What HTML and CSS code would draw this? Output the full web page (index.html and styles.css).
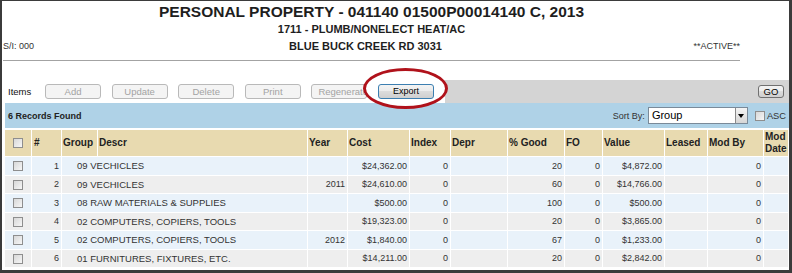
FILE: index.html
```html
<!DOCTYPE html>
<html lang="en">
<head>
    <meta charset="UTF-8">
    <title>Personal Property Items</title>
    <link rel="stylesheet" href="styles.css">
</head>
<body>
    <div class="frame">
        <!-- Account header -->
        <div class="head">
            <div class="title">PERSONAL PROPERTY - 041140 01500P00014140 C, 2013</div>
            <div class="sub">1711 - PLUMB/NONELECT HEAT/AC</div>
            <div class="info">
                <span class="si">S/I: 000</span>
                <span class="addr">BLUE BUCK CREEK RD 3031</span>
                <span class="status">**ACTIVE**</span>
            </div>
            <hr class="rule">
        </div>

        <!-- Toolbar -->
        <div class="toolbar">
            <span class="items-label">Items</span>
            <button class="btn" disabled>Add</button>
            <button class="btn" disabled>Update</button>
            <button class="btn" disabled>Delete</button>
            <button class="btn" disabled>Print</button>
            <button class="btn btn-left" disabled>Regenerate</button>
            <button class="btn btn-on btn-export">Export</button>
            <div class="toolbar-fill">
                <button class="btn btn-on btn-go">GO</button>
            </div>
        </div>
        <div class="mark"></div>

        <!-- Records bar -->
        <div class="records">
            <span class="records-count">6 Records Found</span>
            <div class="sort">
                <span class="sort-label">Sort By:</span>
                <div class="select">
                    <span class="select-value">Group</span>
                    <span class="select-arrow"><span class="tri"></span></span>
                </div>
                <span class="chk chk-asc"></span>
                <span class="asc">ASC</span>
            </div>
        </div>

        <!-- Items grid -->
        <table class="grid">
            <colgroup>
                <col style="width:26px"><col style="width:29px"><col style="width:35px"><col style="width:209px">
                <col style="width:39px"><col style="width:61px"><col style="width:40px"><col style="width:56px">
                <col style="width:56px"><col style="width:37px"><col style="width:61px"><col style="width:42px">
                <col style="width:55px"><col style="width:24px">
            </colgroup>
            <thead>
                <tr>
                    <th class="c"><span class="chk"></span></th>
                    <th class="num-h">#</th>
                    <th>Group</th>
                    <th>Descr</th>
                    <th>Year</th>
                    <th>Cost</th>
                    <th>Index</th>
                    <th>Depr</th>
                    <th>% Good</th>
                    <th>FO</th>
                    <th>Value</th>
                    <th>Leased</th>
                    <th>Mod By</th>
                    <th>Mod Date</th>
                </tr>
            </thead>
            <tbody>
                <tr>
                    <td class="c"><span class="chk"></span></td><td class="r">1</td>
                    <td class="desc" colspan="2">09 VECHICLES</td><td class="r"></td>
                    <td class="r">$24,362.00</td><td class="r">0</td><td></td><td class="r">20</td>
                    <td class="r">0</td><td class="r">$4,872.00</td><td></td><td class="r">0</td><td></td>
                </tr>
                <tr>
                    <td class="c"><span class="chk"></span></td><td class="r">2</td>
                    <td class="desc" colspan="2">09 VECHICLES</td><td class="r">2011</td>
                    <td class="r">$24,610.00</td><td class="r">0</td><td></td><td class="r">60</td>
                    <td class="r">0</td><td class="r">$14,766.00</td><td></td><td class="r">0</td><td></td>
                </tr>
                <tr>
                    <td class="c"><span class="chk"></span></td><td class="r">3</td>
                    <td class="desc" colspan="2">08 RAW MATERIALS &amp; SUPPLIES</td><td class="r"></td>
                    <td class="r">$500.00</td><td class="r">0</td><td></td><td class="r">100</td>
                    <td class="r">0</td><td class="r">$500.00</td><td></td><td class="r">0</td><td></td>
                </tr>
                <tr>
                    <td class="c"><span class="chk"></span></td><td class="r">4</td>
                    <td class="desc" colspan="2">02 COMPUTERS, COPIERS, TOOLS</td><td class="r"></td>
                    <td class="r">$19,323.00</td><td class="r">0</td><td></td><td class="r">20</td>
                    <td class="r">0</td><td class="r">$3,865.00</td><td></td><td class="r">0</td><td></td>
                </tr>
                <tr>
                    <td class="c"><span class="chk"></span></td><td class="r">5</td>
                    <td class="desc" colspan="2">02 COMPUTERS, COPIERS, TOOLS</td><td class="r">2012</td>
                    <td class="r">$1,840.00</td><td class="r">0</td><td></td><td class="r">67</td>
                    <td class="r">0</td><td class="r">$1,233.00</td><td></td><td class="r">0</td><td></td>
                </tr>
                <tr>
                    <td class="c"><span class="chk"></span></td><td class="r">6</td>
                    <td class="desc" colspan="2">01 FURNITURES, FIXTURES, ETC.</td><td class="r"></td>
                    <td class="r">$14,211.00</td><td class="r">0</td><td></td><td class="r">20</td>
                    <td class="r">0</td><td class="r">$2,842.00</td><td></td><td class="r">0</td><td></td>
                </tr>
            </tbody>
        </table>
    </div>
</body>
</html>
```

FILE: styles.css
```css
* {
    box-sizing: border-box;
}

body {
    margin: 0;
    font-family: "Liberation Sans", Arial, sans-serif;
    background-color: white;
}

.frame {
    position: relative;
    width: 792px;
    height: 273px;
    border: solid #3b3b3b;
    border-width: 1px 3px 3px 2px;
    padding-left: 1px;
    overflow: hidden;
}

/* Header */
.head {
    width: 737px;
    color: #1e1e1e;
}

.title {
    margin-top: 1px;
    font-size: 15.5px;
    font-weight: bold;
    line-height: 20px;
    text-align: center;
}

.sub {
    font-size: 11px;
    font-weight: bold;
    line-height: 14px;
    text-align: center;
}

.info {
    display: grid;
    grid-template-columns: 1fr auto 1fr;
    margin-top: 3px;
    line-height: 14px;
}

.si,
.status {
    font-size: 9px;
    color: #333;
}

.addr {
    font-size: 11px;
    font-weight: bold;
    padding-right: 12px;
}

.status {
    justify-self: end;
}

.rule {
    margin: 7px 0 0;
    height: 0;
    border: 0;
    border-top: 1px solid #a3a3a3;
}

/* Toolbar */
.toolbar {
    display: flex;
    align-items: center;
    height: 23px;
    margin: 19px 0 0 2px;
}

.items-label {
    width: 40px;
    padding-left: 3px;
    font-size: 9.5px;
    color: #111;
}

.btn {
    width: 56px;
    height: 15px;
    margin: 0 10.6px 0 0;
    padding: 0 6px;
    font-family: "Liberation Sans", Arial, sans-serif;
    font-size: 9.5px;
    line-height: 13px;
    color: #a3a3a3;
    background-color: #f4f4f4;
    border: 1px solid #b9b9b9;
    border-radius: 3px;
    white-space: nowrap;
}

.btn-left {
    text-align: left;
    overflow: visible;
}

.btn-on {
    color: black;
    background: linear-gradient(#f3f3f3, #ebebeb 50%, #dcdcdc 50%, #cfcfcf);
    border-color: #3c7fb1;
}

.btn-export {
    position: relative;
    z-index: 2;
    font-size: 9px;
}

.toolbar-fill {
    flex: 1;
    align-self: stretch;
    display: flex;
    justify-content: flex-end;
    align-items: center;
    padding-right: 5px;
    background-color: #d4d4d4;
}

.btn-go {
    width: 26px;
    height: 13px;
    margin: 0;
    padding: 0;
    line-height: 11px;
    border-color: #707070;
    font-size: 9.5px;
}

/* red annotation ring round Export, filled white like the marked-up shot */
.mark {
    position: absolute;
    z-index: 1;
    left: 361px;
    top: 67px;
    width: 85px;
    height: 41px;
    background-color: white;
    border: 3.4px solid #b0121b;
    border-radius: 50%;
}

/* Records bar */
.records {
    display: flex;
    align-items: center;
    height: 25px;
    margin-left: 2px;
    padding: 0 3px;
    background-color: #afd2e7;
}

.records-count {
    font-size: 9px;
    font-weight: bold;
    color: #222;
}

.sort {
    display: flex;
    align-items: center;
    margin-left: auto;
}

.sort-label {
    font-size: 9px;
    color: #333;
}

.select {
    display: flex;
    width: 100px;
    height: 17px;
    margin-left: 3px;
    background-color: white;
    border: 1px solid #7a8a99;
}

.select-value {
    flex: 1;
    padding-left: 3px;
    font-size: 11px;
    line-height: 15px;
    color: black;
}

.select-arrow {
    display: flex;
    align-items: center;
    justify-content: center;
    width: 12px;
    background: linear-gradient(#f4f4f4, #d6d6d6);
    border-left: 1px solid #8a8a8a;
}

.tri {
    width: 0;
    height: 0;
    border-left: 3.5px solid transparent;
    border-right: 3.5px solid transparent;
    border-top: 4px solid black;
}

.chk {
    display: inline-block;
    width: 10px;
    height: 10px;
    vertical-align: middle;
    border: 1px solid #8e8e8e;
    background: linear-gradient(135deg, #d8d8d8, #f6f6f6);
}

.chk-asc {
    margin-left: 7px;
}

.asc {
    margin-left: 2px;
    font-size: 9.3px;
    color: #333;
}

/* Items grid */
.grid {
    table-layout: fixed;
    width: 785px;
    margin: 1px 0 0 1px;
    border-collapse: separate;
    border-spacing: 1px;
}

.grid th {
    height: 26px;
    padding: 0 1px;
    font-size: 10px;
    font-weight: bold;
    line-height: 12px;
    text-align: left;
    color: #222;
    background-color: #e8dab0;
}

.grid th.num-h {
    padding-left: 2px;
}

.grid td {
    height: 17.5px;
    padding: 0 2px 0 1px;
    font-size: 9px;
    color: #333;
    white-space: nowrap;
    overflow: hidden;
}

.grid tbody tr:nth-child(odd) td {
    background-color: #e9f2fa;
}

.grid tbody tr:nth-child(even) td {
    background-color: #eeeeee;
}

.grid .c {
    text-align: center;
    padding: 0;
}

.grid .r {
    text-align: right;
}

.grid td.desc {
    padding-left: 15px;
    font-size: 9.5px;
}
```
